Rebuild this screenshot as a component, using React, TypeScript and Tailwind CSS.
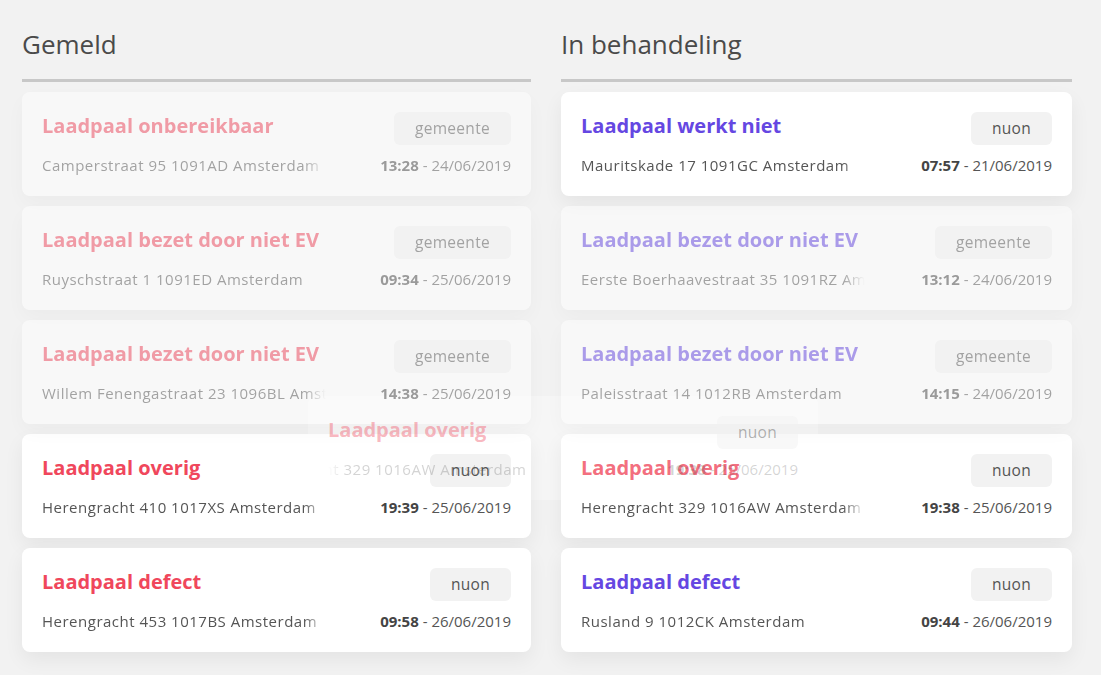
type Melding = {
  title: string;
  company: string;
  address: string;
  time: string;
  date: string;
  faded?: boolean;
  tint?: 'red' | 'purple' | 'redSoft';
};

const gemeld: Melding[] = [
  { title: 'Laadpaal onbereikbaar', company: 'gemeente', address: 'Camperstraat 95 1091AD Amsterdam', time: '13:28', date: '24/06/2019', faded: true },
  { title: 'Laadpaal bezet door niet EV', company: 'gemeente', address: 'Ruyschstraat 1 1091ED Amsterdam', time: '09:34', date: '25/06/2019', faded: true },
  { title: 'Laadpaal bezet door niet EV', company: 'gemeente', address: 'Willem Fenengastraat 23 1096BL Amsterdam', time: '14:38', date: '25/06/2019', faded: true },
  { title: 'Laadpaal overig', company: 'nuon', address: 'Herengracht 410 1017XS Amsterdam', time: '19:39', date: '25/06/2019' },
  { title: 'Laadpaal defect', company: 'nuon', address: 'Herengracht 453 1017BS Amsterdam', time: '09:58', date: '26/06/2019' },
];

const inBehandeling: Melding[] = [
  { title: 'Laadpaal werkt niet', company: 'nuon', address: 'Mauritskade 17 1091GC Amsterdam', time: '07:57', date: '21/06/2019' },
  { title: 'Laadpaal bezet door niet EV', company: 'gemeente', address: 'Eerste Boerhaavestraat 35 1091RZ Amsterdam', time: '13:12', date: '24/06/2019', faded: true },
  { title: 'Laadpaal bezet door niet EV', company: 'gemeente', address: 'Paleisstraat 14 1012RB Amsterdam', time: '14:15', date: '24/06/2019', faded: true },
  { title: 'Laadpaal overig', company: 'nuon', address: 'Herengracht 329 1016AW Amsterdam', time: '19:38', date: '25/06/2019', tint: 'redSoft' },
  { title: 'Laadpaal defect', company: 'nuon', address: 'Rusland 9 1012CK Amsterdam', time: '09:44', date: '26/06/2019' },
];

const titleColor = {
  red: 'text-[#f0475c]',
  purple: 'text-[#6547e2]',
  redSoft: 'text-[#f0475c]/80',
};

function Card({ item, tint }: { item: Melding; tint: 'red' | 'purple' }) {
  const color = titleColor[item.tint ?? tint];
  return (
    <div
      className={`rounded-[8px] bg-white p-5 shadow-[0_8px_20px_rgba(0,0,0,0.06)] ${item.faded ? 'opacity-50' : ''}`}
    >
      <div className="flex items-start justify-between">
        <h3 className={`font-['Open_Sans'] text-[20px] font-bold leading-[27px] ${color}`}>{item.title}</h3>
        <span className="flex h-[33px] items-center rounded-[6px] bg-[#f2f2f2] px-[21px] text-[15.5px] tracking-[0.3px] text-[#555]">
          {item.company}
        </span>
      </div>
      <div className="mt-[9px] flex items-baseline justify-between text-[15px] leading-[22px] text-[#555]">
        <span className="w-[284px] overflow-hidden whitespace-nowrap tracking-[0.5px] [mask-image:linear-gradient(to_right,#000_262px,transparent)]">
          {item.address}
        </span>
        <span className="whitespace-nowrap">
          <b className="font-bold text-[#444]">{item.time}</b>
          <span> - {item.date}</span>
        </span>
      </div>
    </div>
  );
}

function Column({ title, items, tint }: { title: string; items: Melding[]; tint: 'red' | 'purple' }) {
  return (
    <section>
      <h2 className="border-b-[3px] border-[#c8c8c8] pb-[17px] font-['Open_Sans'] text-[26px] leading-[35px] text-[#4a4a4a]">
        {title}
      </h2>
      <div className="mt-[10px] flex flex-col gap-[10px]">
        {items.map((item, i) => (
          <Card key={i} item={item} tint={tint} />
        ))}
      </div>
    </section>
  );
}

// half-way card that is being moved from "Gemeld" to "In behandeling"
function DragGhost() {
  return (
    <>
      <div className="pointer-events-none absolute left-[308px] top-[396px] z-0 h-[104px] w-[510px] rounded-[8px] bg-white/30" />
      <div className="pointer-events-none absolute left-[308px] top-[396px] z-20 h-[104px] w-[510px] p-5 font-['Open_Sans']">
        <div className="flex items-start justify-between">
          <h3 className="text-[20px] font-bold leading-[27px] text-[#f0475c]/40">Laadpaal overig</h3>
          <span className="flex h-[33px] items-center rounded-[6px] bg-[#f2f2f2]/50 px-[21px] text-[15.5px] tracking-[0.3px] text-[#555]/45">
            nuon
          </span>
        </div>
        <div className="mt-[9px] flex items-baseline justify-between text-[15px] leading-[22px] text-[#555]/25">
          <span className="w-[284px] overflow-hidden whitespace-nowrap tracking-[0.5px] [mask-image:linear-gradient(to_right,transparent,#000_20px)]">
            <span className="ml-[-82px] inline-block">Herengracht 329 1016AW Amsterdam</span>
          </span>
          <span className="whitespace-nowrap">
            <b className="font-bold">19:38</b>
            <span> - 25/06/2019</span>
          </span>
        </div>
      </div>
    </>
  );
}

export default function App() {
  return (
    <div className="relative min-h-screen overflow-hidden bg-[#f2f2f2] font-['Open_Sans',sans-serif]">
      <div className="relative z-10 grid grid-cols-[509px_511px] gap-x-[30px] pb-10 pl-[22px] pt-[27px]">
        <Column title="Gemeld" items={gemeld} tint="red" />
        <Column title="In behandeling" items={inBehandeling} tint="purple" />
      </div>
      <DragGhost />
    </div>
  );
}
